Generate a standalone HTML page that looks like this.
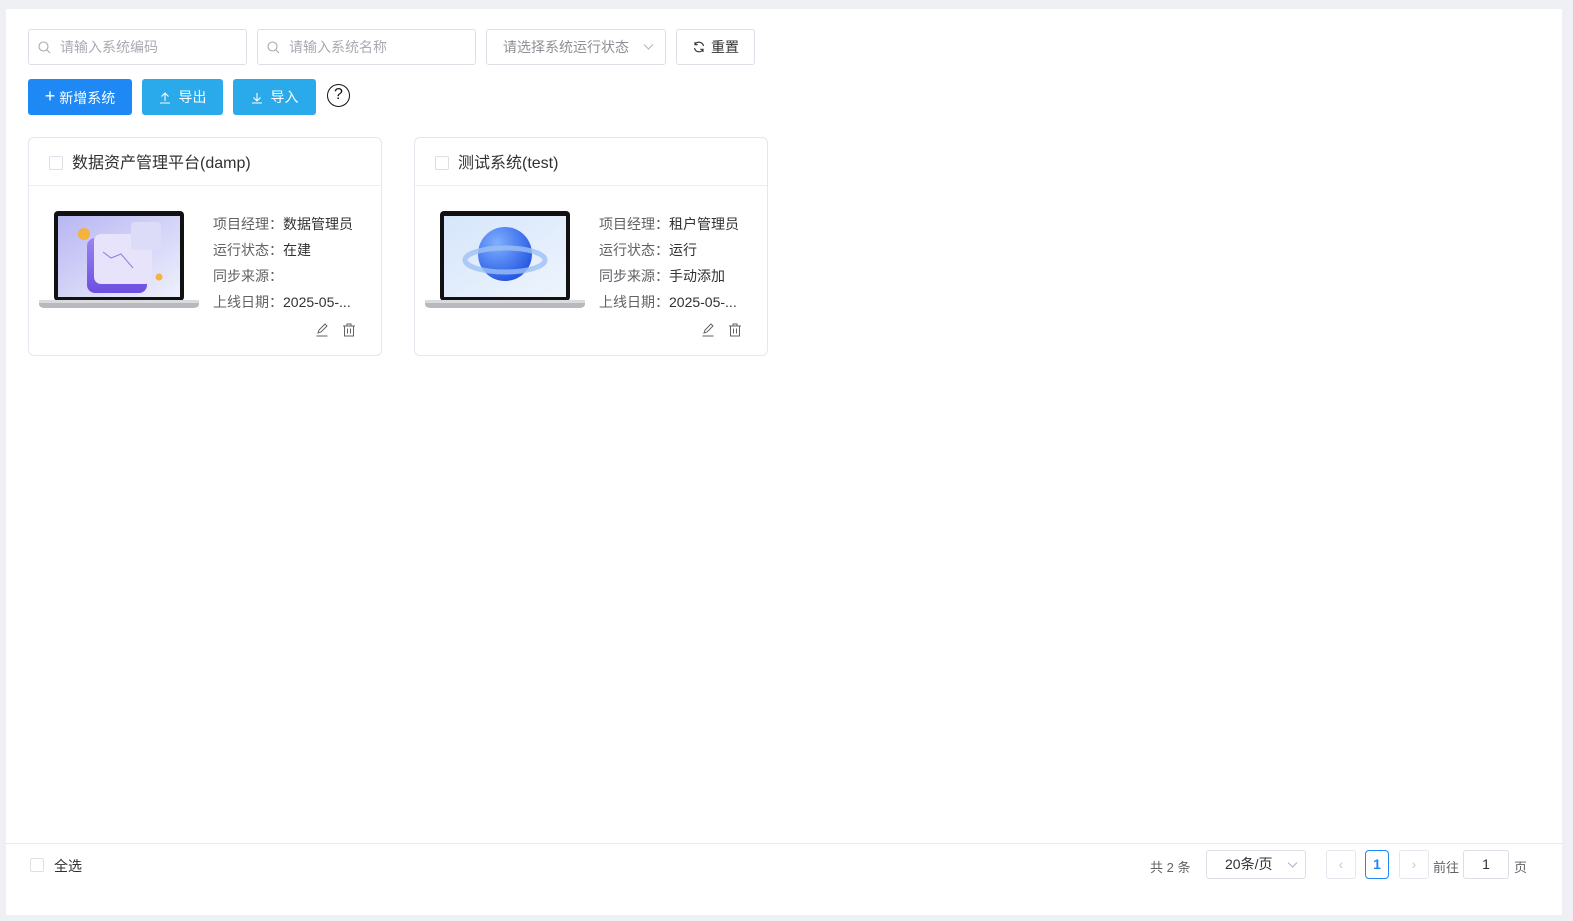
<!DOCTYPE html>
<html><head><meta charset="utf-8"><style>
*{box-sizing:border-box;margin:0;padding:0}
body{width:1573px;height:921px;background:#eff0f3;font-family:"Liberation Sans","Noto Sans CJK SC",sans-serif;position:relative;overflow:hidden;color:#303133}
.panel{position:absolute;left:6px;top:9px;width:1556px;height:906px;background:#fff}
.abs{position:absolute}
.inp{position:absolute;top:29px;height:36px;border:1px solid #dcdfe6;border-radius:3px;font-size:14px;color:#a8abb2;line-height:34px}
.btn{position:absolute;top:79px;height:36px;border-radius:3px;color:#fff;font-size:14px;line-height:36px;text-align:center}
.card{position:absolute;top:137px;width:354px;height:219px;border:1px solid #e4e7ed;border-radius:6px;background:#fff}
.card .hd{height:48px;border-bottom:1px solid #ebeef5;position:relative}
.cb{position:absolute;width:14px;height:14px;border:1px solid #dcdfe6;border-radius:2px;background:#fff}
.card .title{position:absolute;left:43px;top:11px;font-size:16px;color:#303133}
.info{position:absolute;left:184px;top:73px;font-size:14px;line-height:26px;color:#606266;white-space:nowrap}
.info b{font-weight:normal;color:#303133}
.pg{position:absolute;top:850px;height:29px;border:1px solid #dcdfe6;border-radius:3px;font-size:14px;line-height:27px;text-align:center}
</style></head><body>
<div class="panel"></div>

<div class="inp" style="left:28px;width:219px"><svg class="abs" style="left:9px;top:11px" width="13" height="13" viewBox="0 0 13 13" fill="none" stroke="#a8abb2" stroke-width="1.1"><circle cx="5.5" cy="5.5" r="4.5"/><path d="M9 9l3 3"/></svg><span class="abs" style="left:31px">请输入系统编码</span></div>
<div class="inp" style="left:257px;width:219px"><svg class="abs" style="left:9px;top:11px" width="13" height="13" viewBox="0 0 13 13" fill="none" stroke="#a8abb2" stroke-width="1.1"><circle cx="5.5" cy="5.5" r="4.5"/><path d="M9 9l3 3"/></svg><span class="abs" style="left:31px">请输入系统名称</span></div>
<div class="inp" style="left:486px;width:180px"><span class="abs" style="left:16px;color:#8d9095">请选择系统运行状态</span><svg class="abs" style="left:156px;top:13px" width="11" height="8" viewBox="0 0 11 8" fill="none" stroke="#b0b3b8" stroke-width="1"><path d="M1 1.5l4.5 4.5 4.5-4.5"/></svg></div>
<div class="inp" style="left:676px;width:79px;color:#303133"><svg class="abs" style="left:16px;top:11px" width="12" height="12" viewBox="0 0 12 12" fill="none" stroke="#303133" stroke-width="1.1"><path d="M10.5 5A4.6 4.6 0 0 0 2 3.5M1.5 7a4.6 4.6 0 0 0 8.5 1.5"/><path d="M2 1v2.7h2.7M10 11V8.3H7.3"/></svg><span class="abs" style="left:34px">重置</span></div>

<div class="btn" style="left:28px;width:104px;background:#1e88f5"><span style="font-size:18px;position:relative;top:-1px">+</span> 新增系统</div>
<div class="btn" style="left:142px;width:81px;background:#2aaaeb"><svg style="vertical-align:-2px;margin-right:8px" width="12" height="12" viewBox="0 0 12 12" fill="none" stroke="#fff" stroke-width="1.1"><path d="M1 11h10M6 9V1M2.5 4.5L6 1l3.5 3.5"/></svg>导出</div>
<div class="btn" style="left:233px;width:83px;background:#2aaaeb"><svg style="vertical-align:-2px;margin-right:8px" width="12" height="12" viewBox="0 0 12 12" fill="none" stroke="#fff" stroke-width="1.1"><path d="M1 11h10M6 1v8M2.5 5.5L6 9l3.5-3.5"/></svg>导入</div>
<div class="abs" style="left:327px;top:84px;width:23px;height:23px;border:1.6px solid #111;border-radius:50%;font-size:16px;line-height:20px;text-align:center;color:#111">?</div>

<!-- card 1 -->
<div class="card" style="left:28px">
 <div class="hd"><div class="cb" style="left:20px;top:18px"></div><div class="title">数据资产管理平台(damp)</div></div>
 <svg class="abs" style="left:10px;top:72px" width="160" height="100" viewBox="0 0 160 100">
  <rect x="15" y="1" width="130" height="90" rx="4" fill="#111"/>
  <defs><linearGradient id="g1" x1="0" y1="0" x2="1" y2="1"><stop offset="0" stop-color="#b8b6f3"/><stop offset="1" stop-color="#eef0fc"/></linearGradient>
  <linearGradient id="g2" x1="0" y1="0" x2="0" y2="1"><stop offset="0" stop-color="#9a86f0"/><stop offset="1" stop-color="#6c4fe0"/></linearGradient></defs>
  <rect x="19" y="6" width="122" height="81" fill="url(#g1)"/>
  <rect x="48" y="28" width="60" height="55" rx="8" fill="url(#g2)"/>
  <rect x="55" y="24" width="58" height="50" rx="7" fill="#e6e3fb"/>
  <rect x="92" y="12" width="30" height="28" rx="4" fill="#dcdcf8"/>
  <path d="M64 42l8 6 10-4 12 14" fill="none" stroke="#8b7fd8" stroke-width="1"/>
  <circle cx="45" cy="24" r="6" fill="#f5b23c"/>
  <circle cx="120" cy="67" r="3.5" fill="#f5b23c"/>
  <path d="M0 90h160v4c0 3-3 4-6 4H6c-3 0-6-1-6-4z" fill="#b8b9bd"/>
  <rect x="0" y="90" width="160" height="3" fill="#d9dadd"/>
 </svg>
 <div class="info">项目经理：<b>数据管理员</b><br>运行状态：<b>在建</b><br>同步来源：<br>上线日期：<b>2025-05-...</b></div>
 <svg class="abs" style="left:286px;top:185px" width="14" height="14" viewBox="0 0 14 14" fill="none" stroke="#606266" stroke-width="1"><path d="M3 10l1-3 6-6 2 2-6 6z M1.5 13h11"/></svg>
 <svg class="abs" style="left:313px;top:185px" width="14" height="14" viewBox="0 0 14 14" fill="none" stroke="#606266" stroke-width="1"><path d="M1 3h12M5 3V1h4v2M2.5 3v10h9V3M5.5 5.5v5M8.5 5.5v5"/></svg>
</div>

<!-- card 2 -->
<div class="card" style="left:414px">
 <div class="hd"><div class="cb" style="left:20px;top:18px"></div><div class="title">测试系统(test)</div></div>
 <svg class="abs" style="left:10px;top:72px" width="160" height="100" viewBox="0 0 160 100">
  <defs><linearGradient id="g3" x1="0" y1="0" x2="1" y2="1"><stop offset="0" stop-color="#d6e6fb"/><stop offset="1" stop-color="#eef4fd"/></linearGradient>
  <radialGradient id="g4" cx="0.35" cy="0.3" r="0.8"><stop offset="0" stop-color="#7fb0ff"/><stop offset="1" stop-color="#1c4fe0"/></radialGradient></defs>
  <rect x="15" y="1" width="130" height="90" rx="4" fill="#111"/>
  <rect x="19" y="6" width="122" height="81" fill="url(#g3)"/>
  <circle cx="80" cy="44" r="27" fill="url(#g4)"/>
  <ellipse cx="80" cy="50" rx="40" ry="12" fill="none" stroke="#9cc0f5" stroke-width="5" opacity="0.8"/>
  <path d="M0 90h160v4c0 3-3 4-6 4H6c-3 0-6-1-6-4z" fill="#b8b9bd"/>
  <rect x="0" y="90" width="160" height="3" fill="#d9dadd"/>
 </svg>
 <div class="info">项目经理：<b>租户管理员</b><br>运行状态：<b>运行</b><br>同步来源：<b>手动添加</b><br>上线日期：<b>2025-05-...</b></div>
 <svg class="abs" style="left:286px;top:185px" width="14" height="14" viewBox="0 0 14 14" fill="none" stroke="#606266" stroke-width="1"><path d="M3 10l1-3 6-6 2 2-6 6z M1.5 13h11"/></svg>
 <svg class="abs" style="left:313px;top:185px" width="14" height="14" viewBox="0 0 14 14" fill="none" stroke="#606266" stroke-width="1"><path d="M1 3h12M5 3V1h4v2M2.5 3v10h9V3M5.5 5.5v5M8.5 5.5v5"/></svg>
</div>

<!-- footer -->
<div class="abs" style="left:6px;top:843px;width:1556px;height:1px;background:#e8e9ec"></div>
<div class="cb" style="left:30px;top:858px"></div>
<div class="abs" style="left:54px;top:856px;font-size:14px;color:#303133">全选</div>
<div class="abs" style="left:1150px;top:857px;font-size:13px;color:#606266">共 2 条</div>
<div class="pg" style="left:1206px;width:100px;color:#303133;text-align:left;padding-left:18px">20条/页<svg class="abs" style="left:80px;top:10px" width="11" height="8" viewBox="0 0 11 8" fill="none" stroke="#b0b3b8" stroke-width="1"><path d="M1 1.5l4.5 4.5 4.5-4.5"/></svg></div>
<div class="pg" style="left:1326px;width:30px;color:#c8cacf;border-color:#e4e7ed">‹</div>
<div class="pg" style="left:1365px;width:24px;color:#1e88f5;border-color:#1e88f5;font-weight:bold;border-radius:4px">1</div>
<div class="pg" style="left:1399px;width:30px;color:#c8cacf;border-color:#e4e7ed">›</div>
<div class="abs" style="left:1433px;top:857px;font-size:13px;color:#606266">前往</div>
<div class="pg" style="left:1463px;width:46px;color:#303133">1</div>
<div class="abs" style="left:1514px;top:857px;font-size:13px;color:#606266">页</div>
</body></html>
